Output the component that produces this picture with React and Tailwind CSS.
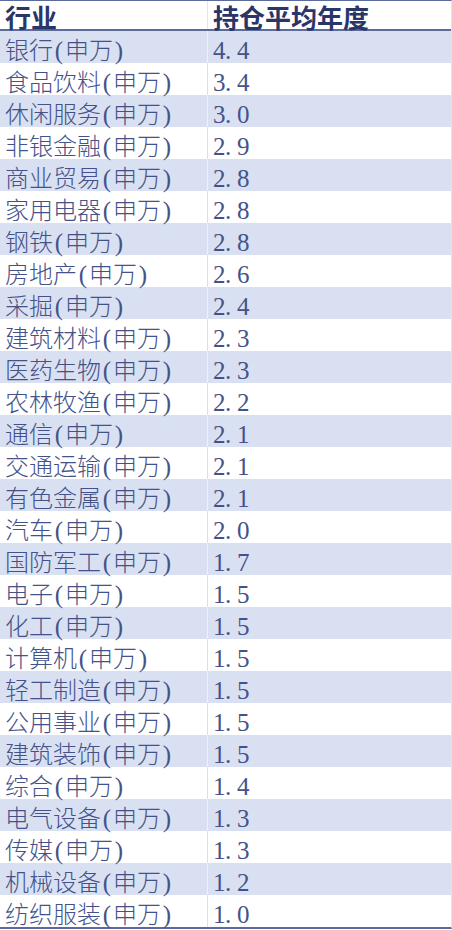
import React from 'react';

const rows = [
  ['银行', '4.4'],
  ['食品饮料', '3.4'],
  ['休闲服务', '3.0'],
  ['非银金融', '2.9'],
  ['商业贸易', '2.8'],
  ['家用电器', '2.8'],
  ['钢铁', '2.8'],
  ['房地产', '2.6'],
  ['采掘', '2.4'],
  ['建筑材料', '2.3'],
  ['医药生物', '2.3'],
  ['农林牧渔', '2.2'],
  ['通信', '2.1'],
  ['交通运输', '2.1'],
  ['有色金属', '2.1'],
  ['汽车', '2.0'],
  ['国防军工', '1.7'],
  ['电子', '1.5'],
  ['化工', '1.5'],
  ['计算机', '1.5'],
  ['轻工制造', '1.5'],
  ['公用事业', '1.5'],
  ['建筑装饰', '1.5'],
  ['综合', '1.4'],
  ['电气设备', '1.3'],
  ['传媒', '1.3'],
  ['机械设备', '1.2'],
  ['纺织服装', '1.0'],
];

const cjk = { fontFamily: '"Noto Sans CJK SC", sans-serif' };
const serif = { fontFamily: '"Liberation Serif", "Noto Sans CJK SC", serif' };

// half-width cell, like the sheet's fixed-width latin glyphs
function Half({ ch, center }) {
  return (
    <span
      className={
        center
          ? 'inline-block w-[12px] text-center text-[25px] font-normal'
          : 'inline-block w-[12px] text-left text-[25px] font-normal'
      }
      style={serif}
    >
      {ch}
    </span>
  );
}

export default function App() {
  return (
    <div className="w-[452px] h-[930px] bg-white" style={cjk}>
      <div className="border-t border-b-2 border-[#5b6b9b] border-r border-r-[#dfe3ec]">
        <div className="flex h-[30px] border-b-2 border-[#5b6b9b] text-[#2a3668] font-bold text-[26px] leading-none">
          <div className="w-[207px] pl-[5px] pt-[3px] whitespace-nowrap">行业</div>
          <div className="flex-1 pl-[5px] pt-[3px] border-l border-[#e3e6ee] whitespace-nowrap">持仓平均年度</div>
        </div>
        {rows.map(([name, val], i) => (
          <div
            key={i}
            className={
              i % 2 === 0
                ? 'flex h-[32px] bg-[#d9e0f1] text-[#44528a] text-[24px] leading-[29px] font-light'
                : 'flex h-[32px] bg-white text-[#44528a] text-[24px] leading-[29px] font-light'
            }
          >
            <div className="w-[207px] pl-[5px] pt-[3px] whitespace-nowrap">
              {name}
              <Half ch="(" center />申万<Half ch=")" center />
            </div>
            <div
              className={
                i % 2 === 0
                  ? 'flex-1 pl-[5px] pt-[3px] border-l border-[#eef1f8] whitespace-nowrap'
                  : 'flex-1 pl-[5px] pt-[3px] border-l border-[#dde0e6] whitespace-nowrap'
              }
            >
              {val.split('').map((c, k) => (
                <Half key={k} ch={c} />
              ))}
            </div>
          </div>
        ))}
      </div>
    </div>
  );
}
